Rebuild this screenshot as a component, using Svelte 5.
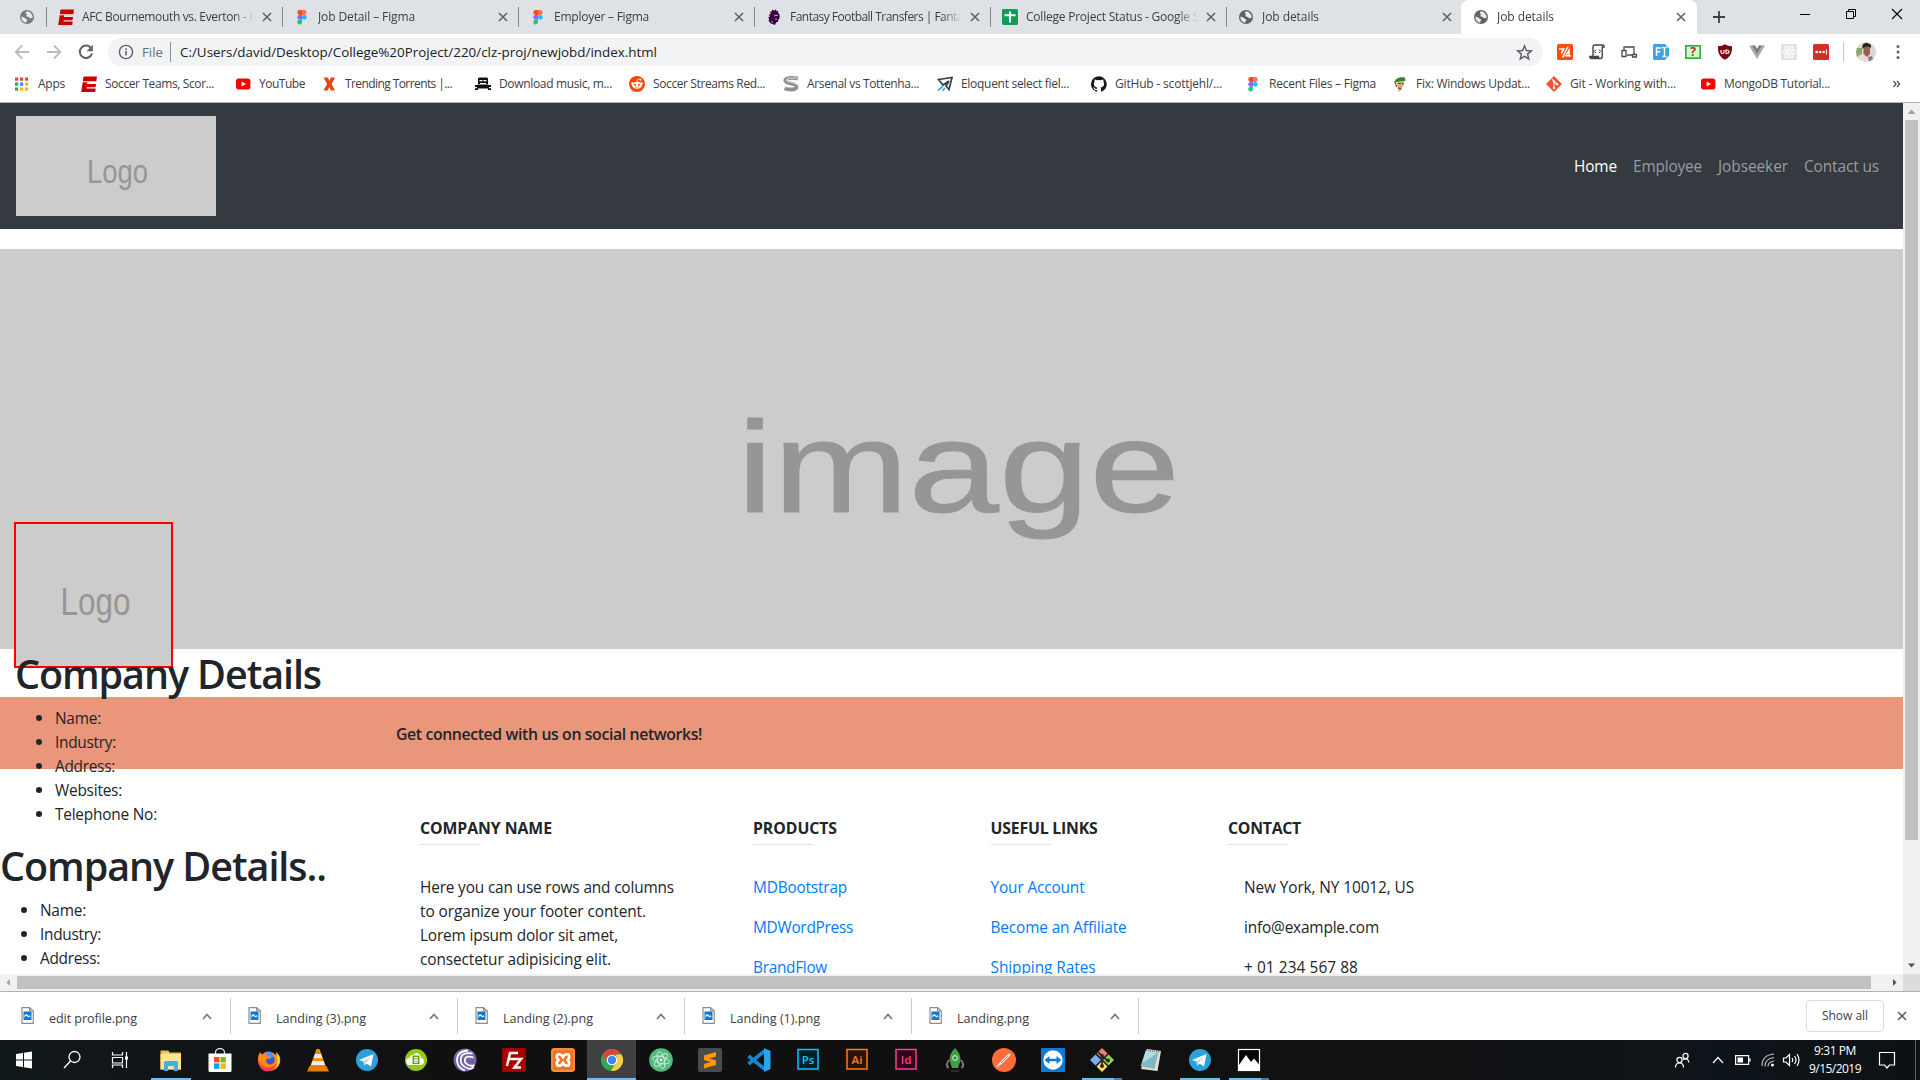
<script>
  // Tunes letter-spacing so that a label takes exactly the given width.
  function fit(node, width) {
    if (!width) return;
    const natural = node.getBoundingClientRect().width;
    node.style.letterSpacing = `${(width - natural) / node.textContent.length}px`;
  }

  const tabs = [
    { icon: 'espn', title: 'AFC Bournemouth vs. Everton - F', w: 173 },
    { icon: 'figma', title: 'Job Detail – Figma', w: 97 },
    { icon: 'figma', title: 'Employer – Figma', w: 95 },
    { icon: 'lion', title: 'Fantasy Football Transfers | Fanta', w: 173 },
    { icon: 'sheets', title: 'College Project Status - Google S', w: 173 },
    { icon: 'globe', title: 'Job details', w: 57 },
    { icon: 'globe', title: 'Job details', w: 57, active: true },
  ];

  const bookmarks = [
    { icon: 'apps', title: 'Apps', w: 27, slot: 67 },
    { icon: 'espn', title: 'Soccer Teams, Scor...', w: 109, slot: 154 },
    { icon: 'youtube', title: 'YouTube', w: 46, slot: 86 },
    { icon: 'torrent', title: 'Trending Torrents |...', w: 107, slot: 154 },
    { icon: 'pirate', title: 'Download music, m...', w: 113, slot: 154 },
    { icon: 'reddit', title: 'Soccer Streams Red...', w: 112, slot: 154 },
    { icon: 'sstream', title: 'Arsenal vs Tottenha...', w: 112, slot: 154 },
    { icon: 'plane', title: 'Eloquent select fiel...', w: 108, slot: 154 },
    { icon: 'github', title: 'GitHub - scottjehl/...', w: 107, slot: 154 },
    { icon: 'figma', title: 'Recent Files – Figma', w: 107, slot: 147 },
    { icon: 'fix', title: 'Fix: Windows Updat...', w: 114, slot: 154 },
    { icon: 'git', title: 'Git - Working with...', w: 106, slot: 154 },
    { icon: 'youtube', title: 'MongoDB Tutorial...', w: 106, slot: 150 },
  ];

  const extensions = ['slash', 'scroll', 'devices', 'fonts', 'question', 'ublock', 'vue', 'react', 'lastpass'];

  const nav = [
    { label: 'Home', w: 43, active: true },
    { label: 'Employee', w: 69 },
    { label: 'Jobseeker', w: 70 },
    { label: 'Contact us', w: 75 },
  ];

  const details = [
    ['Name:', 46], ['Industry:', 61], ['Address:', 60], ['Websites:', 67], ['Telephone No:', 102],
  ];

  const blurb = [
    ['Here you can use rows and columns', 254],
    ['to organize your footer content.', 226],
    ['Lorem ipsum dolor sit amet,', 198],
    ['consectetur adipisicing elit.', 191],
  ];

  const columns = [
    { title: 'PRODUCTS', w: 84, link: true, rows: [['MDBootstrap', 94], ['MDWordPress', 100], ['BrandFlow', 74]] },
    { title: 'USEFUL LINKS', w: 107, link: true, rows: [['Your Account', 94], ['Become an Affiliate', 136], ['Shipping Rates', 105]] },
    { title: 'CONTACT', w: 73, link: false, rows: [['New York, NY 10012, US', 170], ['info@example.com', 135], ['+ 01 234 567 88', 114]] },
  ];

  const downloads = [
    ['edit profile.png', 88], ['Landing (3).png', 90], ['Landing (2).png', 90], ['Landing (1).png', 90], ['Landing.png', 72],
  ];

  const apps = [
    { icon: 'explorer', open: true }, { icon: 'store' }, { icon: 'firefox' }, { icon: 'vlc' },
    { icon: 'telegram' }, { icon: 'camtasia' }, { icon: 'bittorrent' }, { icon: 'filezilla' },
    { icon: 'xampp' }, { icon: 'chrome', current: true }, { icon: 'atom' }, { icon: 'sublime' },
    { icon: 'vscode' }, { icon: 'ps' }, { icon: 'ai' }, { icon: 'id' }, { icon: 'robo' },
    { icon: 'postman' }, { icon: 'teamviewer' }, { icon: 'gitbash', open: true, multi: true },
    { icon: 'notepad' }, { icon: 'telegram', open: true }, { icon: 'photos', open: true, multi: true },
  ];
</script>

{#snippet label(text, w)}<span class="label" use:fit={w}>{text}</span>{/snippet}

{#snippet cross()}
  <svg class="cross" viewBox="0 0 10 10"><path d="M1 1l8 8M9 1L1 9" fill="none" stroke="#5f6368" stroke-width="1.6" /></svg>
{/snippet}

{#snippet icon(name)}
  <svg class="ico" viewBox="0 0 16 16">
    {#if name === 'espn'}
      <path fill="#c00" d="M2.500.500H16l-.6 4.500H1.900zM1.700 6.200h4.600L6 8h9.100l-.6 3.200H5.700l-.2 1.300h9.200L14.200 16H.2z" />
      <path d="M1.700 5.600h13.600" stroke="#eba5a5" stroke-width=".8" />
    {:else if name === 'figma'}
      <path fill="#f24e1e" d="M8 1H5.7a2.4 2.4 0 000 4.9H8z" /><path fill="#ff7262" d="M8 1h2.3a2.4 2.4 0 010 4.9H8z" />
      <path fill="#a259ff" d="M8 5.9H5.7a2.4 2.4 0 000 4.8H8z" /><circle cx="10.3" cy="8.3" r="2.4" fill="#1abcfe" />
      <path fill="#0acf83" d="M5.7 10.7H8v2.5a2.4 2.4 0 11-2.3-2.5z" />
    {:else if name === 'lion'}
      <path fill="#38003c" d="M4.200 2l1.500.7L6.500.3l1.700 1.500L10 .2l.5 2 1.800-.5-.4 1.900c1.900 1.600 2.200 3.800 1.500 5.900L12.200 11l-.3 2-1.800.3L9 16l-4.500-1.800L2.400 11.500l1-.9L2.200 8.500l1.500-.7L3 5.500l1.700-.6z" />
      <path d="M8 7l2-.8 2 .5M9 10l2 .4M5 12l2 1.700" stroke="#dee1e6" fill="none" stroke-width=".8" />
    {:else if name === 'sheets'}
      <rect y="0" width="16" height="16" rx="1.4" fill="#0f9d58" /><path d="M2.5 6.200h11M8 2.500v11" stroke="#fff" stroke-width="2" />
    {:else if name === 'globe'}
      <circle cx="8" cy="8" r="7" fill="#5f6368" />
      <path fill="#e8eaed" d="M8.6 2.3c-2 .3-2.2 1.8-1 2.7 1 .6-.4 1-.2 1.9.5 1.2 2.2.3 2.8 1.6.6 1.2 2.2.4 3.6.2-.4-3.4-2.4-5.8-5.2-6.4zM2.4 7.3c1 1.3 3 .8 3.8 2 .7 1.2 2.2.8 2 2-.1.8-1.2 1-1 2.5-2.900-.4-5-3-4.800-6.500z" />
    {:else if name === 'apps'}
      {#each ['#ea4335', '#ea4335', '#ea4335', '#34a853', '#4285f4', '#fbbc05', '#34a853', '#fbbc05', '#fbbc05'] as c, i}
        <rect x={1 + (i % 3) * 5} y={1.5 + Math.floor(i / 3) * 5} width="3.2" height="3.2" fill={c} />
      {/each}
    {:else if name === 'youtube'}
      <rect x="1" y="2.5" width="14.4" height="11" rx="2.8" fill="#f00" /><path d="M6.6 5.5v5L11 8z" fill="#fff" />
    {:else if name === 'torrent'}
      <path fill="#e2470c" d="M2.500 1.600h4.300L8.500 5l1.300-3.400h4.300L10.500 8l3.600 6.400H10L8.200 11l-1.500 3.400h-4.200L6.100 8z" />
    {:else if name === 'pirate'}
      <path fill="#111" d="M3 2.500l1-1h8l1 1v6H3zM0 9h16v2h-2v1.200h2V14h-3v-1.400H3V14H0v-1.800h2V11H0z" />
      <path d="M4.500 4.700h3M8.500 4.700h3M5 7.500h6" stroke="#fff" stroke-width="1.200" />
    {:else if name === 'reddit'}
      <circle cx="8" cy="8" r="8" fill="#ff4500" /><ellipse cx="8" cy="9.3" rx="5" ry="3.5" fill="#fff" />
      <circle cx="3.4" cy="7.6" r="1.3" fill="#fff" /><circle cx="12.6" cy="7.6" r="1.3" fill="#fff" /><circle cx="11.4" cy="3.6" r="1.1" fill="#fff" />
      <path d="M8 6l.8-3 2.5.6" stroke="#fff" fill="none" stroke-width=".7" />
      <circle cx="6" cy="8.7" r="1" fill="#ff4500" /><circle cx="10" cy="8.7" r="1" fill="#ff4500" />
      <path d="M6 10.8q2 1.200 4 0" stroke="#ff4500" fill="none" stroke-width=".6" />
    {:else if name === 'sstream'}
      <path d="M15 2.800C11 1.500 2.600 1.400 2.300 4.500 2 8 13.500 7 13.500 10.800c0 3.600-8.500 3-12 1.700" fill="none" stroke="#909090" stroke-width="3.800" />
      <path d="M14.500 2.300C10 1.500 4 1.900 3.500 4.200c0 2.300 9 1.600 10.500 4.800" fill="none" stroke="#cfcfcf" stroke-width="1.200" />
    {:else if name === 'plane'}
      <path d="M1.500 3.500L15 1.500l-3 12-3-3.500 3-5-6 4z" fill="none" stroke="#333e48" stroke-width="1.700" /><path d="M6 10l-5 4.500M8 12l-2.500 3" stroke="#4aa8f0" stroke-width="1.800" />
    {:else if name === 'github'}
      <path fill="#191717" d="M8 .2a8 8 0 00-2.500 15.600c.4.100.500-.200.500-.400v-1.500c-2.200.500-2.700-1-2.700-1-.400-.900-.900-1.200-.900-1.200-.700-.500.100-.500.100-.500.800.100 1.200.800 1.200.800.700 1.200 1.900.900 2.300.700.100-.500.300-.900.500-1.100-1.800-.200-3.600-.900-3.600-4 0-.900.300-1.600.800-2.100-.100-.200-.400-1 .100-2.100 0 0 .700-.200 2.200.8a7.500 7.500 0 014 0c1.500-1 2.200-.8 2.200-.8.500 1.100.200 1.900.100 2.100.500.500.800 1.200.8 2.100 0 3.100-1.900 3.800-3.700 4 .300.200.600.700.600 1.500v2.200c0 .200.100.500.500.400A8 8 0 008 .200z" />
    {:else if name === 'fix'}
      <path fill="#2f8a32" d="M2 7C3 2 8 .3 13 1.500l.5 3-2 1-6 .5z" /><path fill="#e0aa72" d="M5 6l6-1 1.300 4-2 1.500-1 4-3 1-1-5z" />
      <path d="M6.500 7.500h2M10 7.500h1.500M6 12l3 .5M3.500 7l1 4" stroke="#493016" stroke-width="1" />
    {:else if name === 'git'}
      <path fill="#f05133" d="M8 0l8 8-8 8-8-8z" /><path d="M6 3l2 2.500V12M8 5.500L10.800 8" stroke="#fff" fill="none" stroke-width="1.100" />
      <circle cx="8" cy="5.500" r="1.200" fill="#fff" /><circle cx="8" cy="12" r="1.200" fill="#fff" /><circle cx="11" cy="8.200" r="1.200" fill="#fff" />
    {:else if name === 'slash'}
      <rect width="16" height="16" rx="1.500" fill="#ff4a12" /><path d="M2 5h4.800L4.200 9.500M11 2.500l-5.500 11M12 6.500v5.200H8.800z" fill="none" stroke="#fff" stroke-width="1.500" /><path d="M12 11.700h2" stroke="#fff" stroke-width="1.500" />
    {:else if name === 'scroll'}
      <path d="M4 12V2.500Q4 1 5.500 1h8.700q1 0 1 2h-2v9.500q0 2-1.700 2H2.400Q.8 14.500.8 12.500h8.500q.2 2 1.800 2" fill="#fff" stroke="#444" stroke-width="1.400" /><path d="M7 5.500L5.500 7.200 7 9M10 5.500l1.500 1.700L10 9" fill="none" stroke="#444" />
      <path d="M1 12.800h8.500v1.700H2z" fill="#444" />
    {:else if name === 'devices'}
      <path d="M3 6V3h10v7M6 11h5M1 6.500h4v6H1zM11.500 10.500h4v2.500h-4z" fill="#fff" stroke="#4b4b4b" stroke-width="1.300" />
    {:else if name === 'fonts'}
      <path fill="#3fa2e0" d="M1.500 0H12l4 4.500v7L12 16H1.500Q0 16 0 14.500v-13Q0 0 1.500 0z" /><path d="M3.500 12V4H8M3.500 7.800h3.700M9 3.500h1.500l1 .7 1-.7H14M11.500 4v8M9.500 12.500h4" fill="none" stroke="#fff" stroke-width="1.400" />
    {:else if name === 'question'}
      <rect x=".8" y="1.800" width="14.400" height="12.400" fill="#d4ffcb" stroke="#35a835" stroke-width="1.600" /><text x="8" y="12.200" text-anchor="middle" font-size="12" font-weight="700" fill="#a03720">?</text>
    {:else if name === 'ublock'}
      <path fill="#800610" d="M8 .3C10 1.700 12 2 15 2.200c.3 6-1.200 10.600-7 13.600C2.200 12.800.7 8.200 1 2.200 4 2 6 1.700 8 .3z" /><path d="M4 6v2q0 1.500 1.400 1.500T7 8V6M9 6v3.500h1q2 0 2-1.700T10 6z" fill="none" stroke="#fff" stroke-width="1.200" />
    {:else if name === 'vue'}
      <path fill="#a9a9a9" d="M0 1.500h6L8 5l2-3.500h6L8 15z" /><path fill="#7b7b7b" d="M3.200 1.500H6L8 5l2-3.500h2.800L8 10z" />
    {:else if name === 'react'}
      <rect width="16" height="16" rx="1" fill="#e2e2e2" /><g fill="none" stroke="#fff" stroke-width="1"><ellipse cx="8" cy="8" rx="6.500" ry="2.500" /><ellipse cx="8" cy="8" rx="6.500" ry="2.500" transform="rotate(60 8 8)" /><ellipse cx="8" cy="8" rx="6.500" ry="2.500" transform="rotate(120 8 8)" /></g><circle cx="8" cy="8" r="1.300" fill="#fff" />
    {:else if name === 'lastpass'}
      <rect width="16" height="16" rx="1.500" fill="#d32d27" /><circle cx="3.700" cy="8" r="1.300" fill="#fff" /><circle cx="7.200" cy="8" r="1.300" fill="#fff" /><circle cx="10.700" cy="8" r="1.300" fill="#fff" /><path d="M13.500 5.500v5" stroke="#fff" />
    {/if}
  </svg>
{/snippet}

{#snippet app(name)}
  <svg class="app-ico" viewBox="0 0 24 24">
    {#if name === 'explorer'}
      <path fill="#e9b949" d="M1.500 2.500h8l1 2H22v17H1.500z" /><path fill="#ffe394" d="M1.500 6H22v15.500H1.500z" /><path fill="#f7d774" d="M4 4.500h6v1.700H4z" /><path fill="#3fb0e8" d="M5 23v-8.500Q5 13 6.500 13h11q1.500 0 1.500 1.500V23h-4v-5H9v5z" />
    {:else if name === 'store'}
      <path d="M7.500 7V4.500a4.500 4 0 019 0V7" fill="none" stroke="#ddd" stroke-width="1.300" /><path fill="#fff" d="M.5 5.500h23v17q0 1.500-1.500 1.500H2Q.5 24 .5 22.500z" />
      <path fill="#f25022" d="M6 9h5.400v5.400H6z" /><path fill="#7fba00" d="M12.400 9h5.400v5.400h-5.400z" /><path fill="#00a4ef" d="M6 15.400h5.400v5.400H6z" /><path fill="#ffb900" d="M12.400 15.400h5.400v5.400h-5.400z" />
    {:else if name === 'firefox'}
      <circle cx="12" cy="12.500" r="9" fill="#3b56c9" /><path fill="#4e9ae8" d="M8 4q6-2 10 3l-5 4-5-2z" />
      <path fill="#ff8a16" d="M3 4q1 2 2.500 2.500Q7 4.500 9 4q-.5 2.500 1.500 4 2.500.5 2 2.500-3-.5-3.500 2.500 1 4 5 3.500 4.500-1 3.500-6Q16 7 14.500 5q5 1 7 5-.5-4-3-6.500 5.500 3.500 4.700 10A11.300 11.300 0 01.8 12.500Q.5 8 3 4z" />
      <path fill="#ff3a4c" d="M1 10q1 7 7 9 7 2 11-3-1 7-8.500 7.500Q1 22.500 1 10z" /><path fill="#ffd52e" d="M19 4.500q4.500 4 3.700 9.500-.7 5-5 7.500 4.500-6 2.300-12z" />
    {:else if name === 'vlc'}
      <path fill="#f48b00" d="M10.500 1h3L20 19H4z" /><path fill="#eee" d="M9 6h6l1.600 4.200H7.400zM6.500 13h11l1.500 4H5z" /><path fill="#e57c00" d="M3.500 18h17l2.500 5.500H1z" />
    {:else if name === 'telegram'}
      <circle cx="12" cy="12" r="11" fill="#2ba0da" /><path fill="#fff" d="M4 12l14.500-6L16 18.500l-4.500-3-2.300 2.300-.7-4.300z" /><path fill="#b9d7e8" d="M8.500 13.500L17 7.500l-6 7-1.800 3.300z" />
    {:else if name === 'camtasia'}
      <circle cx="12" cy="12" r="11" fill="#93c90f" /><path fill="#fff" d="M6 17a3.500 3.500 0 01-.5-7Q6 6.500 9 7q3-3.500 6.500-.5 1.700 1.500 1.800 3.200Q20 10.500 20 13.200q0 3-2.500 3.800z" /><path fill="#6ba000" d="M8.500 7.500h7V16h-7z" /><path d="M10 9.700h4M10 12h4M10 14.200h4" stroke="#fff" stroke-width="1.300" />
    {:else if name === 'bittorrent'}
      <circle cx="12" cy="12" r="11.500" fill="#7460a9" /><path d="M19.500 5.500Q9 3.500 7.800 10.500T15 20.500Q18 21.500 21 19M20.500 9.500q-7.500-2.500-8.500 1.500t3.500 6q3 1.500 6 0M15 2.500Q4 3 4 12.500 4.500 20 12 22.500" fill="none" stroke="#fff" stroke-width="1.800" />
    {:else if name === 'filezilla'}
      <rect x=".6" y=".6" width="22.800" height="22.800" fill="#a90000" stroke="#d20000" stroke-dasharray="1.500 1" /><path d="M5 18L8 5h8M6 11h7M13 11h6l-6.500 8.500H19" stroke="#fff" fill="none" stroke-width="2.500" />
    {:else if name === 'xampp'}
      <rect width="24" height="24" rx="3" fill="#f37321" /><rect x="1" y="1" width="22" height="22" rx="3" fill="none" stroke="#f9a467" /><path d="M6.500 6.500Q10 5.500 12 9q2-3.500 5.500-2.500 2 2.800-1 5.500 3 2.700 1 5.500Q14 18.500 12 15q-2 3.500-5.500 2.500-2-2.800 1-5.500-3-2.700-1-5.500z" fill="none" stroke="#fff" stroke-width="2.600" />
    {:else if name === 'chrome'}
      <circle cx="12" cy="12" r="11" fill="#34a853" /><path fill="#db4437" d="M2.500 6.500A11 11 0 0121.500 6.500H12a5.500 5.500 0 00-5 7.700z" /><path fill="#ffcd40" d="M21.500 6.500A11 11 0 0111 23l5-8.500q2-4-.5-8z" /><circle cx="12" cy="12" r="5.300" fill="#fff" /><circle cx="12" cy="12" r="4.200" fill="#4285f4" />
    {:else if name === 'atom'}
      <circle cx="12" cy="12" r="11.800" fill="#53bb7e" /><g fill="none" stroke="#e4f5ea" stroke-width=".8"><ellipse cx="12" cy="12" rx="8.500" ry="3.400" transform="rotate(15 12 12)" /><ellipse cx="12" cy="12" rx="8.500" ry="3.400" transform="rotate(75 12 12)" /><ellipse cx="12" cy="12" rx="8.500" ry="3.400" transform="rotate(135 12 12)" /></g><circle cx="12" cy="12" r="1.300" fill="#fff" />
    {:else if name === 'sublime'}
      <rect width="24" height="24" rx="2" fill="#4b4b4b" /><path fill="#ff9800" d="M6 7.500L18 4v4.500l-6.500 2L18 12.500V17L6 20.500V16l6.500-2L6 12z" />
    {:else if name === 'vscode'}
      <path d="M17.500 3L1.500 16M1.500 8L17.500 21" stroke="#1685d2" stroke-width="3.600" /><path fill="#2ba4ee" d="M17 0l6.500 3v18L17 24z" /><path fill="#0e0f10" d="M17 7.500v9l-5.500-4.500z" />
    {:else if name === 'ps' || name === 'ai' || name === 'id'}
      {@const c = name === 'ps' ? '#00c8ff' : name === 'ai' ? '#ff7c1c' : '#ff3b8e'}
      <rect x="2" y="1.500" width="20" height="19.500" fill={name === 'ps' ? '#001d2a' : name === 'ai' ? '#281304' : '#2d0719'} stroke={c} stroke-width="1.500" /><text x="12" y="15.500" text-anchor="middle" font-size="11.500" font-weight="600" fill={c}>{name === 'ps' ? 'Ps' : name === 'ai' ? 'Ai' : 'Id'}</text>
    {:else if name === 'robo'}
      <path d="M6 12q-4 5-.5 8M18 12q4 5 .5 8" stroke="#86746a" fill="none" stroke-width="2" /><path fill="#3fa048" d="M12 0q6 6 5.500 12.500L15 20H9l-2.500-7.500Q6 6 12 0z" /><circle cx="12" cy="10" r="3" fill="#9bd69b" /><circle cx="12" cy="10" r="1.300" fill="#347b39" /><path d="M8 23h8" stroke="#444" />
    {:else if name === 'postman'}
      <circle cx="12" cy="12" r="12" fill="#ff6c37" /><path d="M5 19l8-8 5-5" stroke="#fff" stroke-width="2.400" /><path d="M9 15l7-7M5 19l4-2" stroke="#e2572a" stroke-width=".8" />
    {:else if name === 'teamviewer'}
      <rect width="24" height="24" rx="1" fill="#0e7bd8" /><circle cx="12" cy="12" r="9.700" fill="#fff" /><path fill="#0e7bd8" d="M3.500 12L8.500 8v2.700h7V8l5 4-5 4v-2.700h-7V16z" />
    {:else if name === 'gitbash'}
      <path fill="#f27b7b" d="M12 0l5.500 5.500L12 11 6.500 5.500z" /><path fill="#79aef4" d="M5.500 6.500L11 12l-5.500 5.500L0 12z" /><path fill="#8fd35e" d="M18.500 6.500L24 12l-5.500 5.500L13 12z" /><path fill="#f9dd65" d="M12 13l5.500 5.500L12 24l-5.500-5.500z" /><path d="M8 4l4 4v11M12 8l6 5" stroke="#2d2a28" fill="none" stroke-width="1.800" /><circle cx="12" cy="8" r="2" fill="#2d2a28" /><circle cx="12" cy="18" r="2" fill="#2d2a28" /><circle cx="18" cy="12.500" r="2" fill="#2d2a28" />
    {:else if name === 'notepad'}
      <path fill="#e6e0cb" d="M8 1l14 2-3.500 20L2 21z" /><path fill="#7cb8c8" d="M7 2l12.500 2-4 17L1.500 18z" /><path fill="#b2dce3" d="M7 2l12.500 2-8 6L3 15z" /><path d="M7 2l14 2" stroke="#777" stroke-width="1.500" stroke-dasharray="1 1" />
    {:else if name === 'photos'}
      <rect x="1.500" y="1.500" width="21" height="21" fill="#050505" stroke="#fff" stroke-width="1.200" /><path fill="#fff" d="M2 17l7-10 5 7 3-3.500 5.500 6.500v6H2z" />
    {/if}
  </svg>
{/snippet}

{#snippet bullets(items)}
  <ul class="details">
    {#each items as [text, w]}<li>{@render label(text, w)}</li>{/each}
  </ul>
{/snippet}

<div class="screen">
  <header class="tabs">
    <div class="pinned">{@render icon('globe')}</div>
    {#each tabs as tab}
      <div class="tab" class:active={tab.active}>
        {@render icon(tab.icon)}
        <div class="tab-title">{@render label(tab.title, tab.w)}</div>
        {@render cross()}
      </div>
    {/each}
    <svg class="plus" viewBox="0 0 12 12"><path d="M6 0v12M0 6h12" stroke="#3c4043" stroke-width="1.800" /></svg>
    <div class="window-buttons">
      <svg viewBox="0 0 12 12"><path d="M1 6.500h10" stroke="#000" /></svg>
      <svg viewBox="0 0 12 12"><path d="M3.500 3.500v-2h7v7h-2M1.500 3.500h7v7h-7z" fill="none" stroke="#000" /></svg>
      <svg viewBox="0 0 12 12"><path d="M1 1l10 10M11 1L1 11" stroke="#000" stroke-width="1.100" /></svg>
    </div>
  </header>

  <div class="toolbar">
    <div class="arrows">
      <svg viewBox="0 0 16 16"><path d="M15 8H2M8 1.500L1.700 8 8 14.500" fill="none" stroke="#b9bbbe" stroke-width="1.800" /></svg>
      <svg viewBox="0 0 16 16"><path d="M1 8h13M8 1.500L14.300 8 8 14.500" fill="none" stroke="#b9bbbe" stroke-width="1.800" /></svg>
      <svg viewBox="0 0 16 16"><path d="M13.300 4.500A6.200 6.200 0 1014 9.500" fill="none" stroke="#5f6368" stroke-width="2" /><path d="M14.900.8v6.500H8.500z" fill="#5f6368" /></svg>
    </div>
    <div class="omnibox">
      <svg class="info" viewBox="0 0 16 16"><circle cx="8" cy="8" r="6.600" fill="none" stroke="#5f6368" stroke-width="1.400" /><path d="M8 7v4.500M8 4.300v1.600" stroke="#5f6368" stroke-width="1.600" /></svg>
      <span class="scheme">{@render label('File', 21)}</span>
      <span class="url">{@render label('C:/Users/david/Desktop/College%20Project/220/clz-proj/newjobd/index.html', 477)}</span>
      <svg class="star" viewBox="0 0 16 16"><path d="M8 1.800l1.800 4.300 4.700.4-3.600 3 1.100 4.600L8 11.700l-4 2.400 1.100-4.600-3.600-3 4.700-.4z" fill="none" stroke="#5f6368" stroke-width="1.400" /></svg>
    </div>
    <div class="extensions">
      {#each extensions as name}{@render icon(name)}{/each}
    </div>
    <svg class="avatar" viewBox="0 0 20 20">
      <clipPath id="face"><circle cx="10" cy="10" r="10" /></clipPath>
      <g clip-path="url(#face)"><rect width="20" height="20" fill="#d9dcc8" /><path fill="#8ba56f" d="M0 6h6v9H0z" /><path fill="#d0d8dd" d="M14 5h6v8h-6z" /><path fill="#f1d7e1" d="M0 20q1-8 8-8l8 1 4 7z" /><path fill="#95634a" d="M7.500 4.500h6.500V12l-3 3-3.500-3z" /><path fill="#2b211c" d="M6.500 7Q5.500 0 11 1t3.500 5l-2-1.500-4 .5z" /><path fill="#8a7a7c" d="M12 15l4-1 2 6h-5z" /></g>
    </svg>
    <svg class="dots" viewBox="0 0 4 16"><circle cx="2" cy="2.500" r="1.500" /><circle cx="2" cy="8" r="1.500" /><circle cx="2" cy="13.500" r="1.500" /></svg>
  </div>

  <div class="bookmarks">
    {#each bookmarks as b}
      <div class="bookmark" style:width="{b.slot}px">{@render icon(b.icon)}{@render label(b.title, b.w)}</div>
    {/each}
    <svg class="more" viewBox="0 0 8 8"><path d="M1 1l2.500 3L1 7M4.500 1L7 4 4.500 7" fill="none" stroke="#4d5156" stroke-width="1.300" /></svg>
  </div>

  <div class="viewport">
    <main class="page">
      <nav class="navbar">
        <svg class="brand" viewBox="0 0 200 100"><text x="71" y="66.500" font-size="33.500" textLength="61" lengthAdjust="spacingAndGlyphs">Logo</text></svg>
        <div class="links">
          {#each nav as item}<a href="#top" class:active={item.active}>{@render label(item.label, item.w)}</a>{/each}
        </div>
      </nav>
      <svg class="hero" viewBox="0 0 1903 400"><text x="737" y="263" font-size="130" textLength="443" lengthAdjust="spacingAndGlyphs">image</text></svg>

      <div class="overlap">
        <footer class="footer">
          <div class="social">{@render label('Get connected with us on social networks!', 306)}</div>
          <div class="columns">
            <section>
              <h6>{@render label('COMPANY NAME', 132)}</h6>
              <hr />
              <p class="blurb">{#each blurb as [text, w]}{@render label(text, w)}<br />{/each}</p>
            </section>
            {#each columns as col}
              <section>
                <h6>{@render label(col.title, col.w)}</h6>
                <hr />
                {#each col.rows as [text, w]}
                  <p class:link={col.link} class:contact={!col.link}>{@render label(text, w)}</p>
                {/each}
              </section>
            {/each}
          </div>
        </footer>
        <div class="company">
          <svg class="company-logo" viewBox="0 0 159 146"><rect x="1" y="1" width="157" height="144" fill="#ccc" stroke="#f00" stroke-width="2" /><text x="46.500" y="93" font-size="39" textLength="70" lengthAdjust="spacingAndGlyphs">Logo</text></svg>
          <div class="indented">
            <h1>{@render label('Company Details', 306)}</h1>
            {@render bullets(details)}
          </div>
          <h1>{@render label('Company Details..', 326)}</h1>
          {@render bullets(details.slice(0, 3))}
        </div>
      </div>
    </main>
    <div class="vbar">
      <svg viewBox="0 0 17 17"><path d="M4.500 11h8L8.500 6.500z" fill="#a3a3a3" /></svg>
      <div class="vthumb"></div>
      <svg viewBox="0 0 17 17"><path d="M5 6.500h7L8.500 10.500z" fill="#505050" /></svg>
    </div>
    <div class="hbar">
      <svg viewBox="0 0 17 17"><path d="M10 5v7L6.500 8.500z" fill="#a3a3a3" /></svg>
      <div class="hthumb"></div>
      <svg viewBox="0 0 17 17"><path d="M7 5v7l3.500-3.500z" fill="#505050" /></svg>
    </div>
    <div class="corner"></div>
  </div>

  <div class="shelf">
    {#each downloads as [name, w]}
      <div class="download">
        <svg class="file" viewBox="0 0 13 17"><path d="M1 .7h7.500L12.300 4v12.300H1z" fill="#fff" stroke="#8d8d8d" stroke-width="1.200" /><path d="M8.500.7V4h3.500" fill="none" stroke="#8d8d8d" /><rect x="2.500" y="4.500" width="8" height="8.500" fill="#0b78d0" /><path d="M3.500 11V8l2-1 2 2 1-1 1.500 3-1.500-1.500-1 1L5 8.500z" fill="#fff" /></svg>
        {@render label(name, w)}
        <svg class="caret" viewBox="0 0 10 7"><path d="M1 6l4-4.500L9 6" fill="none" stroke="#7a7d80" stroke-width="1.800" /></svg>
      </div>
    {/each}
    <button class="show-all">{@render label('Show all', 46)}</button>
    {@render cross()}
  </div>

  <div class="taskbar">
    <div class="system">
      <svg viewBox="0 0 24 24"><path fill="#fff" d="M4 6l7-1v6.500H4zM12 4.800l8-1.200v7.900h-8zM4 12.500h7V19l-7-1zM12 12.500h8v8l-8-1.200z" /></svg>
      <svg viewBox="0 0 24 24"><circle cx="14.500" cy="9" r="5.500" fill="none" stroke="#fff" stroke-width="1.300" /><path d="M10.500 13l-6.500 7" stroke="#fff" stroke-width="1.400" /></svg>
      <svg viewBox="0 0 24 24"><path d="M4.500 4v3h10V4M4.500 20v-3h10v3M4.500 9.500h10v5.500h-10zM18.500 4v16" fill="none" stroke="#fff" stroke-width="1.200" /><path d="M17 8.500h3v3h-3z" fill="#fff" /></svg>
    </div>
    <div class="apps">
      {#each apps as a}
        <div class="app" class:current={a.current} class:open={a.open} class:multi={a.multi}>{@render app(a.icon)}</div>
      {/each}
    </div>
    <div class="tray">
      <svg class="people" viewBox="0 0 16 16"><circle cx="11.500" cy="4" r="2.600" /><circle cx="5.500" cy="8" r="2.600" /><path d="M1.500 15.500q0-4.500 4-4.500t4 4.500M9 7.500q5-2 6 3" /></svg>
      <svg class="up" viewBox="0 0 12 12"><path d="M1 9l5-5.500L11 9" /></svg>
      <svg class="battery" viewBox="0 0 16 10"><path d="M.6.600h13v8.800H.600zM15 3.500v3" /><path d="M2.500 2.500h5.500v5H2.500z" fill="#fff" stroke="none" /></svg>
      <svg class="wifi" viewBox="0 0 14 14"><path d="M1 13Q1 2 13 1M4 13.500Q4 5.500 13 4.500M7 13.500Q7 9 13 8" stroke="#bbb" /><circle cx="11.500" cy="12" r="1.500" fill="#fff" stroke="none" /></svg>
      <svg class="volume" viewBox="0 0 17 14"><path d="M1 5h2.500L7 1.500v11L3.500 9H1zM9.500 5q1.500 2 0 4M12 3q3 4 0 8M14.500 1q4 6 0 12" /></svg>
      <div class="clock"><span>{@render label('9:31 PM', 42)}</span><span>{@render label('9/15/2019', 52)}</span></div>
      <svg class="notice" viewBox="0 0 18 18"><path d="M1.500 1.500h15v12.500H11.500L9 17l-2.500-3h-5z" /></svg>
    </div>
  </div>
</div>

<style>
  :global(body) { background: #fff; }
  * { box-sizing: border-box; }
  svg { display: block; flex: none; }
  .screen {
    width: 1920px; height: 1080px; overflow: hidden; display: flex; flex-direction: column;
    font: 12px 'Open Sans', 'Noto Sans', sans-serif; color: #3c4043;
  }
  .label { display: inline-block; white-space: pre; }
  .ico { width: 16px; height: 16px; }
  .cross { width: 10px; height: 10px; }

  .tabs { height: 34px; flex: none; background: #dee1e6; display: flex; align-items: center; }
  .pinned { width: 46px; padding-left: 19px; opacity: .8; }
  .tab { width: 236px; height: 34px; padding: 0 10px 0 12px; display: flex; align-items: center; position: relative; }
  .tab:not(.active)::before { content: ''; position: absolute; left: 0; top: 7px; width: 1px; height: 20px; background: #84888d; }
  .tab.active { background: #fff; border-radius: 8px 8px 0 0; margin-left: -1px; }
  .tab.active .cross { margin-left: -1px; }
  .tab-title { width: 172px; margin: 0 8px; padding-bottom: 1px; overflow: hidden; flex: none; mask-image: linear-gradient(90deg, #000 88%, transparent); }
  .plus { width: 12px; height: 12px; margin-left: 16px; }
  .window-buttons { margin: -6px 17px 0 auto; display: flex; gap: 34px; }
  .window-buttons svg { width: 12px; height: 12px; }

  .toolbar { height: 36px; flex: none; display: flex; align-items: center; }
  .arrows { display: flex; gap: 16px; padding-left: 14px; width: 108px; }
  .arrows svg { width: 16px; height: 16px; }
  .omnibox { width: 1435px; height: 28px; border-radius: 14px; background: #f1f3f4; display: flex; align-items: center; padding: 0 10px; font-size: 13.400px; }
  .info { width: 16px; height: 16px; margin-right: 8px; }
  .scheme { width: 29px; height: 20px; line-height: 20px; color: #6b6f73; border-right: 1px solid #8b8f93; font-size: 13.200px; }
  .url { margin-left: 9px; color: #202124; }
  .star { width: 17px; height: 17px; margin-left: auto; }
  .extensions { display: flex; gap: 16px; padding-left: 14px; width: 301px; height: 20px; align-items: center; border-right: 1px solid #c4c6c9; }
  .avatar { width: 20px; height: 20px; margin-left: 12px; }
  .dots { width: 4px; height: 16px; margin-left: 20px; fill: #5f6368; }

  .bookmarks { height: 33px; flex: none; padding: 0 0 5px 14px; display: flex; align-items: center; border-bottom: 1px solid #b6b4b6; }
  .bookmark { display: flex; align-items: center; gap: 8px; flex: none; }
  .more { width: 9px; height: 8px; margin-left: 42px; }

  .viewport { height: 889px; flex: none; display: grid; grid-template: 871px 17px / 1903px 17px; border-bottom: 1px solid #b2b2b2; }
  .page { overflow: hidden; background: #fff; color: #212529; font-size: 15.400px; line-height: 24px; }
  .navbar { height: 126px; background: #343a40; display: flex; justify-content: space-between; align-items: center; padding: 0 24px 0 16px; }
  .brand { width: 200px; height: 100px; background: #ccc; }
  .brand text, .hero text, .company-logo text { fill: #969696; font-family: 'Liberation Sans', sans-serif; }
  .hero text { stroke: #969696; stroke-width: 1px; }
  .links { display: flex; gap: 16px; padding-top: 2px; }
  .links a { color: #999c9f; text-decoration: none; }
  .links a.active { color: #fff; }
  .hero { width: 1903px; height: 400px; margin-top: 20px; background: #ccc; }

  .overlap { display: grid; grid-template-columns: 1903px; }
  .overlap > * { grid-area: 1 / 1; }
  .footer { padding-top: 48px; }
  .social { height: 72px; background: #e9967a; padding: 25px 0 0 396px; font-weight: 600; font-size: 15.800px; }
  .columns { display: grid; grid-template-columns: 333px 237.500px 237.500px 260px; padding: 47px 0 0 420px; }
  h6 { margin: 0; font-size: 15.800px; font-weight: 700; line-height: 24px; }
  hr { width: 60px; height: 1px; border: 0; background: #e2e2e2; margin: 4px 0 31px; }
  p { margin: 0 0 16px; height: 24px; }
  .link { color: #007bff; }
  .contact { padding-left: 16px; }
  .company { position: relative; }
  .company-logo { position: absolute; left: 14px; top: -127px; width: 159px; height: 146px; }
  .indented { padding-left: 15px; position: relative; }
  h1 { margin: 0 0 8px; padding-top: 1px; height: 48px; font-size: 39.500px; font-weight: 600; line-height: 48px; }
  .details { margin: 0 0 16px; padding: 0 0 0 40px; height: 120px; list-style: disc; }
  .details li { height: 24px; }
  .details li::marker { font-size: 18px; }

  .vbar { background: #f1f1f1; display: flex; flex-direction: column; align-items: center; }
  .vbar svg, .hbar svg { width: 17px; height: 17px; }
  .vthumb { width: 13px; height: 720px; background: #c1c1c1; margin-bottom: auto; }
  .hbar { background: #f1f1f1; display: flex; align-items: center; justify-content: space-between; }
  .hthumb { width: 1854px; height: 13px; background: #c1c1c1; margin-right: auto; }
  .corner { background: #dcdcdc; }

  .shelf { height: 48px; flex: none; display: flex; align-items: center; font-size: 12.600px; }
  .download { width: 227px; height: 36px; padding: 0 18px 0 18px; display: flex; align-items: center; border-right: 1px solid #ccc; flex: none; }
  .download:first-child { width: 231px; padding-left: 22px; }
  .download .label { padding-top: 4px; }
  .file { width: 13px; height: 17px; margin: -2px 14px 0 -1px; }
  .file + .label { margin-left: 1px; }
  .caret { width: 10px; height: 7px; margin-left: auto; }
  .show-all { margin-left: auto; width: 78px; height: 32px; padding: 0 0 2px; border: 1px solid #dadce0; border-radius: 4px; background: #fff; font: 500 12px 'Open Sans', sans-serif; color: #3c4043; }
  .shelf > :global(.cross) { margin: 0 13px; }

  .taskbar { height: 40px; flex: none; background: linear-gradient(90deg, #10171b, #101010 25%, #111 70%, #0d1419 90%, #0e1114); display: flex; align-items: center; color: #fff; }
  .system { display: flex; gap: 24px; padding-left: 12px; width: 146px; }
  .system svg { width: 24px; height: 24px; }
  .apps { display: flex; }
  .app { width: 49px; height: 40px; display: flex; align-items: center; justify-content: center; }
  .app-ico { width: 24px; height: 24px; }
  .current { background: #3e4041; border-bottom: 2px solid #76b9ed; padding-top: 2px; }
  .open { background: linear-gradient(#76b9ed, #76b9ed) 50% 100% / 40px 2px no-repeat; }
  .multi { background: linear-gradient(90deg, #76b9ed 80%, #4e7ba0 80%) 50% 100% / 40px 2px no-repeat; }
  .tray { margin-left: auto; display: flex; align-items: center; padding-right: 4px; }
  .tray svg { fill: none; stroke: #fff; stroke-width: 1.200; }
  .people { width: 16px; height: 16px; margin-right: 22px; }
  .up { width: 12px; height: 12px; margin-right: 11px; }
  .battery { width: 16px; height: 10px; margin-right: 10px; }
  .wifi { width: 14px; height: 14px; margin-right: 7px; }
  .volume { width: 18px; height: 14px; }
  .clock { width: 70px; display: flex; flex-direction: column; align-items: center; line-height: 18px; }
  .notice { width: 18px; height: 18px; margin: 0 19px 0 8px; }
  .tray::after { content: ''; width: 1px; height: 40px; background: #5c5f61; }
</style>
